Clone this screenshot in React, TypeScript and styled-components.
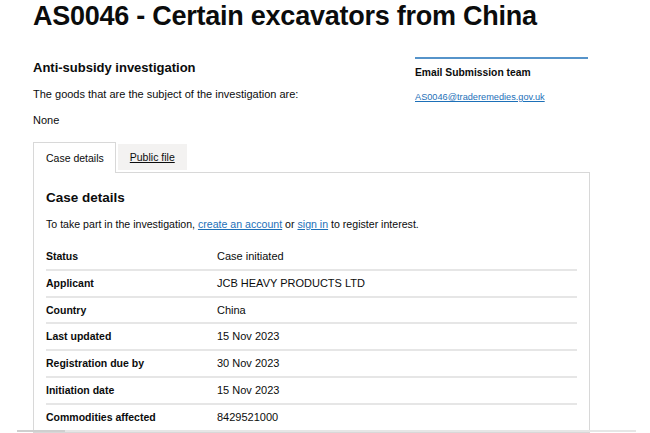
import React from "react";
import styled, { createGlobalStyle } from "styled-components";

const GlobalStyle = createGlobalStyle`
  body {
    margin: 0;
    background: #ffffff;
    color: #0b0c0c;
    font-family: "Liberation Sans", Arial, sans-serif;
    overflow: hidden;
  }
`;

const rows = [
  { key: "Status", value: "Case initiated" },
  { key: "Applicant", value: "JCB HEAVY PRODUCTS LTD" },
  { key: "Country", value: "China" },
  { key: "Last updated", value: "15 Nov 2023" },
  { key: "Registration due by", value: "30 Nov 2023" },
  { key: "Initiation date", value: "15 Nov 2023" },
  { key: "Commodities affected", value: "8429521000" },
];

const App = () => {
  return (
    <Page>
      <GlobalStyle />
      <Title>AS0046 - Certain excavators from China</Title>
      <Columns>
        <MainCol>
          <SubHeading>Anti-subsidy investigation</SubHeading>
          <Body>The goods that are the subject of the investigation are:</Body>
          <Body>None</Body>
        </MainCol>
        <Aside>
          <AsideTitle>Email Submission team</AsideTitle>
          <SmallLink href="#">AS0046@traderemedies.gov.uk</SmallLink>
        </Aside>
      </Columns>
      <Tabs>
        <TabList>
          <Tab selected>Case details</Tab>
          <Tab>
            <TabLink href="#">Public file</TabLink>
          </Tab>
        </TabList>
        <Panel>
          <PanelHeading>Case details</PanelHeading>
          <Intro>
            To take part in the investigation, <Link href="#">create an account</Link> or{" "}
            <Link href="#">sign in</Link> to register interest.
          </Intro>
          <Summary>
            {rows.map((r) => (
              <Row key={r.key}>
                <Key>{r.key}</Key>
                <Value>{r.value}</Value>
              </Row>
            ))}
          </Summary>
        </Panel>
      </Tabs>
      <ScrollBar>
        <Thumb />
      </ScrollBar>
    </Page>
  );
};

export default App;

const Page = styled.div`
  width: 557px;
  padding-left: 33px;
`;

const Title = styled.h1`
  margin: 0;
  font-size: 27px;
  line-height: 32px;
  font-weight: 700;
  letter-spacing: -0.25px;
`;

const Columns = styled.div`
  display: grid;
  grid-template-columns: 1fr 173px;
  column-gap: 10px;
  margin-top: 25px;
`;

const MainCol = styled.div`
  padding-top: 1px;
`;

const SubHeading = styled.h2`
  margin: 0 0 10px;
  font-size: 13px;
  line-height: 19px;
  font-weight: 700;
`;

const Body = styled.p`
  margin: 0 0 12px;
  font-size: 11px;
  line-height: 14px;
`;

const Intro = styled(Body)`
  font-size: 10.6px;
`;

const Aside = styled.div`
  border-top: 2px solid #5694ca;
  padding-top: 7px;
  margin-left: -2px;
  margin-right: 2px;
`;

const AsideTitle = styled.h3`
  margin: 0 0 6px;
  font-size: 10.3px;
  line-height: 14px;
  font-weight: 700;
`;

const Link = styled.a`
  color: #1d70b8;
  text-decoration: underline;
  text-underline-offset: 1px;
`;

const SmallLink = styled(Link)`
  font-size: 9.2px;
  line-height: 12px;
`;

const Tabs = styled.div`
  margin-top: 3px;
`;

const TabList = styled.div`
  display: flex;
  align-items: flex-end;
  gap: 2px;
`;

const Tab = styled.div<{ selected?: boolean }>`
  box-sizing: border-box;
  font-size: 10.5px;
  line-height: 14px;
  padding: ${(p) => (p.selected ? "8px 11px 8px 12px" : "6px 12px 6px 12px")};
  background: ${(p) => (p.selected ? "#ffffff" : "#f3f2f1")};
  border: ${(p) => (p.selected ? "1px solid #d8d8d8" : "none")};
  border-bottom: none;
  margin-bottom: ${(p) => (p.selected ? "-1px" : "2px")};
  position: relative;
  z-index: ${(p) => (p.selected ? 1 : 0)};
`;

const TabLink = styled.a`
  color: #0b0c0c;
  text-decoration: underline;
`;

const Panel = styled.div`
  border: 1px solid #d8d8d8;
  padding: 15px 12px 0;
`;

const PanelHeading = styled.h2`
  margin: 0 0 9px;
  font-size: 13.5px;
  line-height: 20px;
  font-weight: 700;
`;

const Summary = styled.dl`
  margin: 13px 0 0;
`;

const Row = styled.div`
  display: flex;
  border-bottom: 2px solid #e6e6e6;
  padding: 6px 0;
  font-size: 11px;
  line-height: 12.8px;
`;

const Key = styled.dt`
  width: 171px;
  font-size: 10.5px;
  font-weight: 700;
`;

const Value = styled.dd`
  margin: 0;
`;

const ScrollBar = styled.div`
  position: fixed;
  left: 17px;
  right: 14px;
  bottom: 1px;
  height: 2px;
  background: #e6e6e6;
`;

const Thumb = styled.div`
  width: 48px;
  height: 2px;
  background: #cfcfcf;
`;
